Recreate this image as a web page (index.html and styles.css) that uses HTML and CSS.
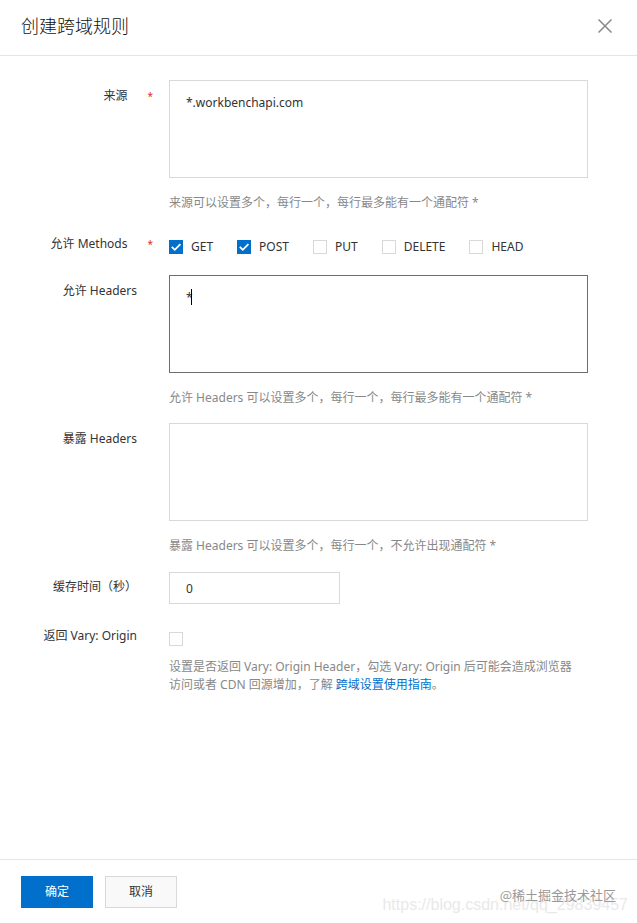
FILE: index.html
```html
<!DOCTYPE html>
<html lang="zh-CN">
<head>
    <meta charset="UTF-8">
    <meta name="viewport" content="width=device-width, initial-scale=1.0">
    <title>创建跨域规则</title>
    <link rel="stylesheet" href="styles.css">
</head>
<body>
    <header class="panel-header">
        <h1>创建跨域规则</h1>
        <button type="button" class="close-btn" aria-label="关闭">
            <svg width="14" height="14" viewBox="0 0 14 14"><path d="M0.5 0.5L13.5 13.5M13.5 0.5L0.5 13.5"/></svg>
        </button>
    </header>

    <form class="panel-body" id="corsForm">
        <div class="form-row">
            <label class="form-label" for="origin">来源<span class="star">*</span></label>
            <div class="form-field">
                <textarea id="origin">*.workbenchapi.com</textarea>
                <p class="help">来源可以设置多个，每行一个，每行最多能有一个通配符 *</p>
            </div>
        </div>

        <div class="form-row" role="group" aria-labelledby="methodsLabel">
            <span class="form-label" id="methodsLabel">允许 Methods<span class="star">*</span></span>
            <div class="form-field checks">
                <label><input type="checkbox" checked>GET</label>
                <label><input type="checkbox" checked>POST</label>
                <label><input type="checkbox">PUT</label>
                <label><input type="checkbox">DELETE</label>
                <label><input type="checkbox">HEAD</label>
            </div>
        </div>

        <div class="form-row">
            <label class="form-label" for="allowHeaders">允许 Headers</label>
            <div class="form-field">
                <div class="editing">
                    <textarea id="allowHeaders">*</textarea>
                    <span class="caret"></span>
                </div>
                <p class="help">允许 Headers 可以设置多个，每行一个，每行最多能有一个通配符 *</p>
            </div>
        </div>

        <div class="form-row">
            <label class="form-label" for="exposeHeaders">暴露 Headers</label>
            <div class="form-field">
                <textarea id="exposeHeaders"></textarea>
                <p class="help">暴露 Headers 可以设置多个，每行一个，不允许出现通配符 *</p>
            </div>
        </div>

        <div class="form-row">
            <label class="form-label" for="maxAge">缓存时间（秒）</label>
            <div class="form-field number">
                <input type="text" id="maxAge" value="0">
            </div>
        </div>

        <div class="form-row">
            <label class="form-label" for="vary">返回 Vary: Origin</label>
            <div class="form-field">
                <div class="checks"><input type="checkbox" id="vary"></div>
                <p class="help vary-help">设置是否返回 Vary: Origin Header，勾选 Vary: Origin 后可能会造成浏览器访问或者 CDN 回源增加，了解 <a href="#">跨域设置使用指南</a>。</p>
            </div>
        </div>
    </form>

    <footer class="panel-footer">
        <button type="submit" form="corsForm" class="btn primary">确定</button>
        <button type="button" class="btn">取消</button>
        <span class="mark-url">https://blog.csdn.net/qq_29839457</span>
        <span class="mark-site">@稀土掘金技术社区</span>
    </footer>
</body>
</html>
```
FILE: styles.css
```css
* {
    box-sizing: border-box;
}

body {
    margin: 0;
    min-height: 100vh;
    display: flex;
    flex-direction: column;
    background: #fff;
    color: #333;
    font-family: "Noto Sans", "Noto Sans CJK SC", sans-serif;
    font-size: 12px;
    line-height: 18px;
}

input, textarea, button {
    font: inherit;
    color: inherit;
    margin: 0;
}

.panel-header {
    display: flex;
    justify-content: space-between;
    align-items: center;
    height: 56px;
    padding: 0 25px 3px 21px;
    border-bottom: 1px solid #e5e5e5;
}

h1 {
    margin: 0;
    color: #111;
    font-size: 18px;
    line-height: 26px;
    font-weight: 300;
}

.close-btn {
    padding: 0;
    border: none;
    background: none;
    line-height: 0;
    cursor: pointer;
}

.close-btn svg {
    fill: none;
    stroke: #888;
    stroke-width: 1.5;
}

.panel-body {
    flex: 1;
    display: flex;
    flex-direction: column;
    gap: 16px;
    padding: 24px 49px 24px 0;
}

.form-row {
    display: flex;
    gap: 16px;
}

.form-label {
    width: 153px;
    flex-shrink: 0;
    padding: 1px 16px 0 0;
    line-height: 30px;
    text-align: right;
}

.form-label:has(.star) {
    padding-right: 0;
}

.star {
    margin-left: 20px;
    color: #d93026;
    font-size: 10px;
}

.form-field {
    flex: 1;
    min-width: 0;
}

textarea {
    display: block;
    width: 100%;
    height: 98px;
    padding: 13px 16px;
    border: 1px solid #d9d9d9;
    border-radius: 0;
    background: #fff;
    resize: none;
    outline: none;
}

.editing {
    position: relative;
}

.editing textarea,
textarea:focus {
    border-color: #6d6d6d;
}

/* text cursor after the typed character */
.caret {
    position: absolute;
    left: 22px;
    top: 14px;
    width: 1px;
    height: 16px;
    background: #000;
}

.help {
    margin: 16px 0 0;
    padding-right: 8px;
    color: #888;
}

.help a {
    color: #0070cc;
    text-decoration: none;
}

.vary-help {
    margin-top: 12px;
}

.checks {
    display: flex;
    flex-wrap: wrap;
    gap: 24px;
    padding-top: 12px;
    line-height: 14px;
}

.checks label {
    display: flex;
    gap: 8px;
}

input[type="checkbox"] {
    appearance: none;
    width: 14px;
    height: 14px;
    border: 1px solid #d9d9d9;
    background: #fff;
}

input[type="checkbox"]:checked {
    border-color: #0070cc;
    background: #0070cc url('data:image/svg+xml,<svg xmlns="http://www.w3.org/2000/svg" viewBox="0 0 12 12"><path d="M1.8 5.8L4.8 8.8L10.4 3.2" fill="none" stroke="white" stroke-width="1.8"/></svg>') center / 12px 12px no-repeat;
}

.number {
    padding-top: 1px;
}

.number input {
    display: block;
    width: 171px;
    height: 32px;
    padding: 0 16px;
    border: 1px solid #d9d9d9;
}

.panel-footer {
    position: relative;
    display: flex;
    gap: 12px;
    padding: 16px 21px 15px;
    border-top: 1px solid #e5e5e5;
}

.btn {
    width: 72px;
    height: 32px;
    padding: 0;
    border: 1px solid #d9d9d9;
    background: #f9f9f9;
    cursor: pointer;
}

.btn.primary {
    border-color: #0070cc;
    background: #0070cc;
    color: #fff;
}

.mark-url,
.mark-site {
    position: absolute;
    white-space: nowrap;
}

.mark-url {
    right: 9px;
    bottom: 9px;
    color: #e9e9e9;
    font-family: "Liberation Sans", sans-serif;
    font-size: 16px;
}

.mark-site {
    right: 21px;
    bottom: 19px;
    color: #999;
    font-family: "Noto Sans CJK SC", sans-serif;
    font-size: 13px;
}
```
